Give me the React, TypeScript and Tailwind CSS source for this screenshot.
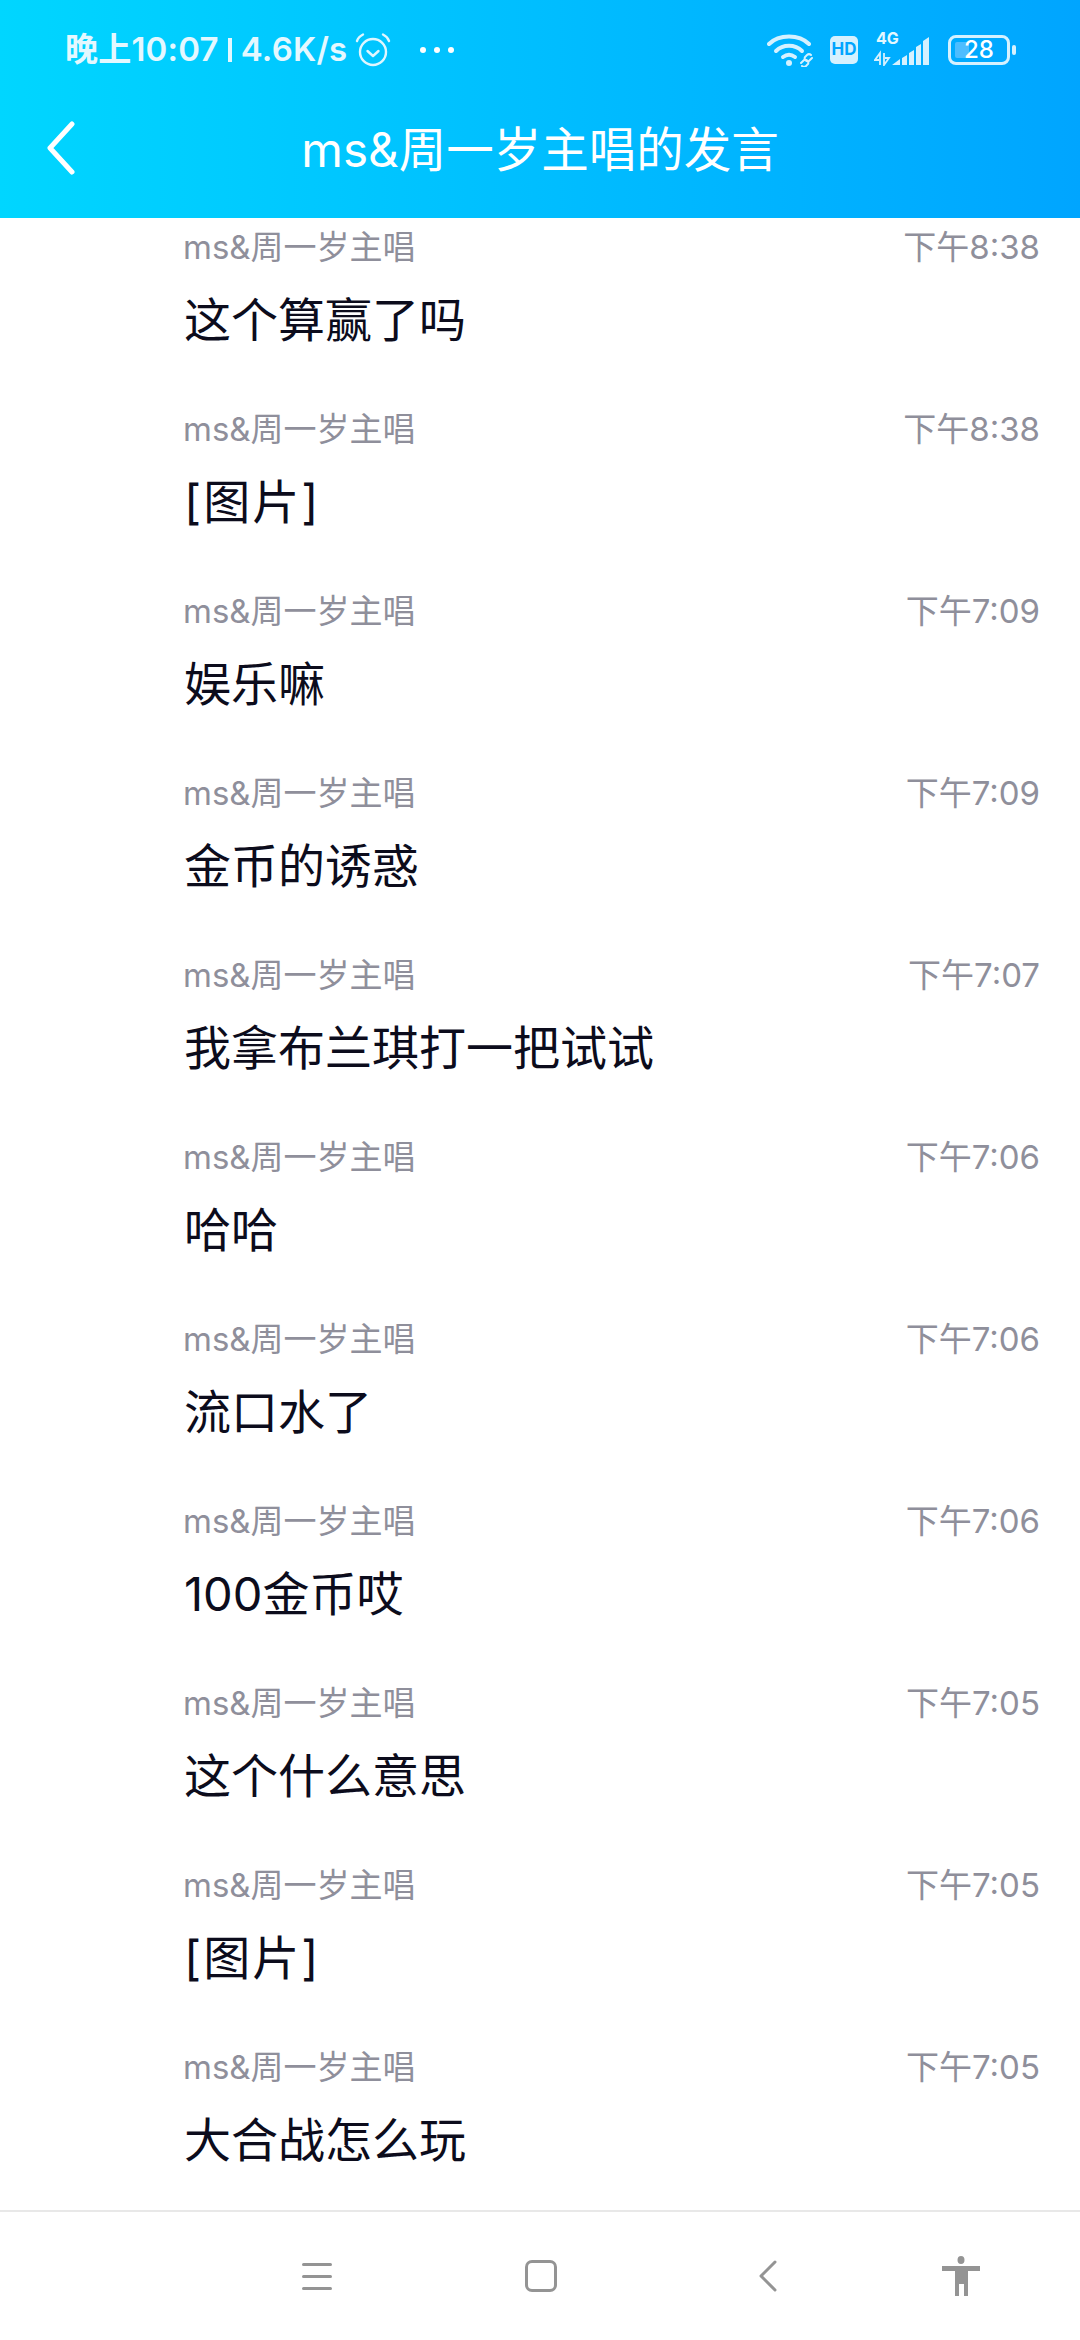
const messages = [
  { time: '下午8:38', text: '这个算赢了吗' },
  { time: '下午8:38', text: '[图片]' },
  { time: '下午7:09', text: '娱乐嘛' },
  { time: '下午7:09', text: '金币的诱惑' },
  { time: '下午7:07', text: '我拿布兰琪打一把试试' },
  { time: '下午7:06', text: '哈哈' },
  { time: '下午7:06', text: '流口水了' },
  { time: '下午7:06', text: '100金币哎' },
  { time: '下午7:05', text: '这个什么意思' },
  { time: '下午7:05', text: '[图片]' },
  { time: '下午7:05', text: '大合战怎么玩' },
]

function AlarmIcon() {
  return (
    <svg width="36" height="36" viewBox="0 0 36 36" fill="none" stroke="#dff6ff" strokeLinecap="round" strokeLinejoin="round">
      <circle cx="18" cy="20" r="13" strokeWidth="2.4" />
      <path d="M12.5 19l5.5 5 5.5-5" strokeWidth="2.4" />
      <path d="M2 9c1-3 3-5 6-6.5M34 9c-1-3-3-5-6-6.5" strokeWidth="2.4" />
    </svg>
  )
}

function WifiIcon() {
  return (
    <svg width="48" height="34" viewBox="0 0 48 34" fill="none" stroke="#d5f1ff" strokeLinecap="round">
      <path d="M2 11C12 1 32 1 42 11" strokeWidth="4" />
      <path d="M9 18c7-7 19-7 26 0" strokeWidth="4" />
      <path d="M16 24c4-3 8-3 12 0" strokeWidth="4" />
      <circle cx="22" cy="30" r="3" fill="#d5f1ff" stroke="none" />
      <path d="M33 27l3-3a3 3 0 014 4l-2 2a3 3 0 01-4 0M44 22l-3 3a3 3 0 01-4-4l2-2a3 3 0 014 0" strokeWidth="2" transform="translate(1 3)" />
    </svg>
  )
}

function SignalIcon() {
  return (
    <svg width="60" height="32" viewBox="0 0 60 32" fill="#d5f1ff">
      <path d="M6 31V19L1 26h4M10 19v12l5-7h-4" stroke="#d5f1ff" strokeWidth="1.8" fill="none" />
      <path d="M18 31l8-6v6zM28 24l5-3v10h-5zM35 19l5-3v15h-5zM42 13l5-3v21h-5zM49 7l6-4v28h-6z" />
    </svg>
  )
}

function BackIcon() {
  return (
    <svg width="30" height="54" viewBox="0 0 30 54" fill="none" stroke="#ffffff" strokeWidth="5" strokeLinecap="round" strokeLinejoin="round">
      <path d="M26 3L4 27l22 24" />
    </svg>
  )
}

function PersonIcon() {
  return (
    <svg width="38" height="40" viewBox="0 0 38 40" fill="#949494">
      <ellipse cx="19" cy="4" rx="3.5" ry="4" />
      <path d="M0 10h38v5H26v25h-4V28h-5v12h-4V15H0z" />
    </svg>
  )
}

export default function App() {
  return (
    <div className="flex flex-col w-[1080px] h-[2340px] bg-white overflow-hidden font-['Inter','Noto_Sans_CJK_SC',sans-serif]">
      <div className="h-[218px] shrink-0 bg-gradient-to-r from-[#00d6ff] to-[#00a5ff]">
        <div className="flex items-center h-[100px] pl-[65px] pr-[64px]">
          <span className="flex items-center text-[33px] font-semibold tracking-[0.2px] text-[#e4f8ff] whitespace-nowrap">
            晚上10:07
            <span className="w-[4px] h-[24px] mx-[9px] bg-[#e4f8ff]" />
            4.6K/s
          </span>
          <span className="ml-[8px]"><AlarmIcon /></span>
          <div className="flex gap-[8px] ml-[29px]">
            <span className="w-[6px] h-[6px] rounded-full bg-white" />
            <span className="w-[6px] h-[6px] rounded-full bg-white" />
            <span className="w-[6px] h-[6px] rounded-full bg-white" />
          </div>
          <div className="flex items-center ml-auto">
            <WifiIcon />
            <span className="flex items-center justify-center w-[28px] h-[28px] ml-[15px] rounded-[5px] bg-[#d5f1ff] text-[#00a5ff] text-[17px] font-bold">HD</span>
            <div className="relative ml-[16px]">
              <SignalIcon />
              <span className="absolute left-[2px] top-[-5px] text-[16px] leading-[18px] font-bold text-[#e4f8ff]">4G</span>
            </div>
            <div className="flex items-center ml-[14px]">
              <div className="relative flex items-center justify-center w-[62px] h-[30px] rounded-[8px] border-[3px] border-[#d5f1ff]">
                <span className="absolute left-[4px] top-[4px] bottom-[4px] w-[14px] rounded-[2px] bg-[#4dbdff]" />
                <span className="relative text-[24px] leading-none font-medium text-white">28</span>
              </div>
              <span className="w-[4px] h-[10px] ml-[2px] rounded-[2px] bg-[#d5f1ff]" />
            </div>
          </div>
        </div>
        <div className="relative flex items-center justify-center h-[100px]">
          <span className="absolute left-[46px] top-[21px]"><BackIcon /></span>
          <span className="text-[47.5px] text-white whitespace-nowrap">ms&amp;周一岁主唱的发言</span>
        </div>
      </div>

      <div className="flex-1 overflow-hidden pt-[6px]">
        {messages.map((m, i) => (
          <div key={i} className="h-[182px] pl-[183px] pr-[40px]">
            <div className="flex justify-between text-[33px] leading-[46px] text-[#8f8f9b]">
              <span>ms&amp;周一岁主唱</span>
              <span>{m.time}</span>
            </div>
            <div className={m.text === '[图片]' ? 'mt-[18px] ml-px text-[47px] leading-[64px] tracking-[2px] text-[#0c0c1c]' : 'mt-[18px] ml-px text-[47px] leading-[64px] text-[#0c0c1c]'}>{m.text}</div>
          </div>
        ))}
      </div>

      <div className="flex items-center h-[130px] shrink-0 border-t-2 border-[#e8e8e8] relative">
        <div className="flex flex-col gap-[9px] ml-[302px]">
          <span className="w-[30px] h-[3px] rounded-full bg-[#949494]" />
          <span className="w-[30px] h-[3px] rounded-full bg-[#949494]" />
          <span className="w-[30px] h-[3px] rounded-full bg-[#949494]" />
        </div>
        <span className="w-[32px] h-[32px] ml-[193px] rounded-[7px] border-[3px] border-[#949494]" />
        <svg className="ml-[202px]" width="18" height="32" viewBox="0 0 18 32" fill="none" stroke="#949494" strokeWidth="3" strokeLinecap="round" strokeLinejoin="round">
          <path d="M16 2L2 16l14 14" />
        </svg>
        <span className="ml-[165px]"><PersonIcon /></span>
      </div>
    </div>
  )
}
